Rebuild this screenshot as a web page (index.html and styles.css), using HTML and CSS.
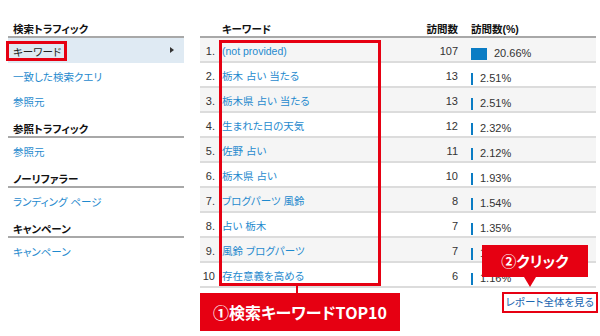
FILE: index.html
```html
<!DOCTYPE html>
<html lang="ja">
<head>
<meta charset="UTF-8"/>
<link rel="stylesheet" href="styles.css">
</head>
<body>
<div class="page">
<div class="side">
<div class="sec">検索トラフィック</div>
<div class="item current">キーワード<span class="arrow"></span></div>
<div class="item"><a href="#">一致した検索クエリ</a></div>
<div class="item"><a href="#">参照元</a></div>
<div class="sec">参照トラフィック</div>
<div class="item"><a href="#">参照元</a></div>
<div class="sec">ノーリファラー</div>
<div class="item"><a href="#">ランディング ページ</a></div>
<div class="sec">キャンペーン</div>
<div class="item"><a href="#">キャンペーン</a></div>
</div>

<div class="main">
<div class="row head">
<span class="num"></span><span class="kw">キーワード</span><span class="visits">訪問数</span><span class="pct">訪問数(%)</span>
</div>
<div class="row odd"><span class="num">1.</span><span class="kw"><a href="#">(not provided)</a></span><span class="visits">107</span><span class="pct"><span class="bar" style="width:16px"></span>20.66%</span></div>
<div class="row"><span class="num">2.</span><span class="kw"><a href="#">栃木 占い 当たる</a></span><span class="visits">13</span><span class="pct"><span class="bar" style="width:2px"></span>2.51%</span></div>
<div class="row odd"><span class="num">3.</span><span class="kw"><a href="#">栃木県 占い 当たる</a></span><span class="visits">13</span><span class="pct"><span class="bar" style="width:2px"></span>2.51%</span></div>
<div class="row"><span class="num">4.</span><span class="kw"><a href="#">生まれた日の天気</a></span><span class="visits">12</span><span class="pct"><span class="bar" style="width:2px"></span>2.32%</span></div>
<div class="row odd"><span class="num">5.</span><span class="kw"><a href="#">佐野 占い</a></span><span class="visits">11</span><span class="pct"><span class="bar" style="width:2px"></span>2.12%</span></div>
<div class="row"><span class="num">6.</span><span class="kw"><a href="#">栃木県 占い</a></span><span class="visits">10</span><span class="pct"><span class="bar" style="width:2px"></span>1.93%</span></div>
<div class="row odd"><span class="num">7.</span><span class="kw"><a href="#">ブログパーツ 風鈴</a></span><span class="visits">8</span><span class="pct"><span class="bar" style="width:2px"></span>1.54%</span></div>
<div class="row"><span class="num">8.</span><span class="kw"><a href="#">占い 栃木</a></span><span class="visits">7</span><span class="pct"><span class="bar" style="width:2px"></span>1.35%</span></div>
<div class="row odd"><span class="num">9.</span><span class="kw"><a href="#">風鈴 ブログパーツ</a></span><span class="visits">7</span><span class="pct"><span class="bar" style="width:2px"></span>1.35%</span></div>
<div class="row"><span class="num">10</span><span class="kw"><a href="#">存在意義を高める</a></span><span class="visits">6</span><span class="pct"><span class="bar" style="width:2px"></span>1.16%</span></div>
<div class="foot"><a href="#" class="full">レポート全体を見る</a></div>
</div>

<!-- annotations drawn over the report -->
<div class="mark mark-side"></div>
<div class="mark mark-kw"></div>
<div class="tie"></div>
<div class="label label-top10">①検索キーワードTOP10</div>
<div class="label label-click">②クリック</div>
</div>
</body>
</html>
```

FILE: styles.css
```css
body {
	margin:0;
	background:#fff;
	font-family:"Liberation Sans","Noto Sans CJK JP",sans-serif;
	font-size:10.5px;
	color:#333;
	font-feature-settings:"palt";
}
a {
	color:#1f8ace;
	text-decoration:none;
}
.page {
	position:relative;
	width:600px;
	height:336px;
	display:flex;
	gap:16px;
	padding:13px 0 0 8px;
	box-sizing:border-box;
}

/* sidebar */
.side {
	width:176px;
}
.sec {
	height:23px;
	line-height:32px;
	padding-left:5px;
	font-weight:bold;
	color:#111;
	border-bottom:2px solid #a8a8a8;
}
.item {
	height:25px;
	line-height:28px;
	padding-left:5px;
	position:relative;
}
.item.current {
	background:#dfeaf3;
	color:#222;
}
.arrow {
	position:absolute;
	right:10px;
	top:9px;
	border-left:4px solid #333;
	border-top:3px solid transparent;
	border-bottom:3px solid transparent;
}

/* report table */
.main {
	width:396px;
}
.row {
	display:grid;
	grid-template-columns:17px 193px 48px 138px;
	height:23px;
	line-height:27px;
	border-bottom:2px solid #dcdcdc;
}
.row.odd {
	background:#f5f5f5;
}
.row.head {
	line-height:32px;
	font-weight:bold;
	color:#111;
	border-bottom-color:#a8a8a8;
}
.num {
	text-align:right;
	padding-right:2px;
	font-size:11px;
	color:#333;
}
.kw {
	padding-left:5px;
}
.visits {
	text-align:right;
	font-size:11px;
	color:#333;
}
.pct {
	padding-left:13px;
	display:flex;
	align-items:center;
	padding-top:2px;
	font-size:11px;
}
.head .pct {
	display:block;
	padding-top:0;
	font-size:10.5px;
}
.head .visits {
	font-size:10.5px;
	color:#111;
}
.bar {
	display:inline-block;
	height:12px;
	background:#0a7cc4;
	margin-right:7px;
}
.foot {
	text-align:right;
	margin-top:4px;
	margin-right:-2px;
}
.full {
	display:inline-block;
	color:#1a66b0;
	border:2px solid #e60012;
	padding:0 2px;
	line-height:17px;
}

/* red annotations */
.mark {
	position:absolute;
	border:3px solid #e60012;
	box-sizing:border-box;
}
.mark-side {
	left:6px;
	top:41px;
	width:61px;
	height:20px;
}
.mark-kw {
	left:219px;
	top:40px;
	width:162px;
	height:246px;
}
.tie {
	position:absolute;
	left:296px;
	top:285px;
	width:2px;
	height:8px;
	background:#e60012;
}
.label {
	position:absolute;
	background:#e60012;
	color:#fff;
	text-align:center;
	font-family:"Noto Sans CJK JP","Liberation Sans",sans-serif;
}
.label-top10 {
	left:200px;
	top:293px;
	width:200px;
	height:38px;
	line-height:38px;
	font-size:16px;
	font-weight:bold;
}
.label-click {
	left:482px;
	top:245px;
	width:106px;
	height:32px;
	line-height:31px;
	font-size:15px;
	font-weight:bold;
}
.label-click::after {
	content:"";
	position:absolute;
	left:42px;
	top:32px;
	border-top:10px solid #e60012;
	border-left:6px solid transparent;
	border-right:6px solid transparent;
}
```
